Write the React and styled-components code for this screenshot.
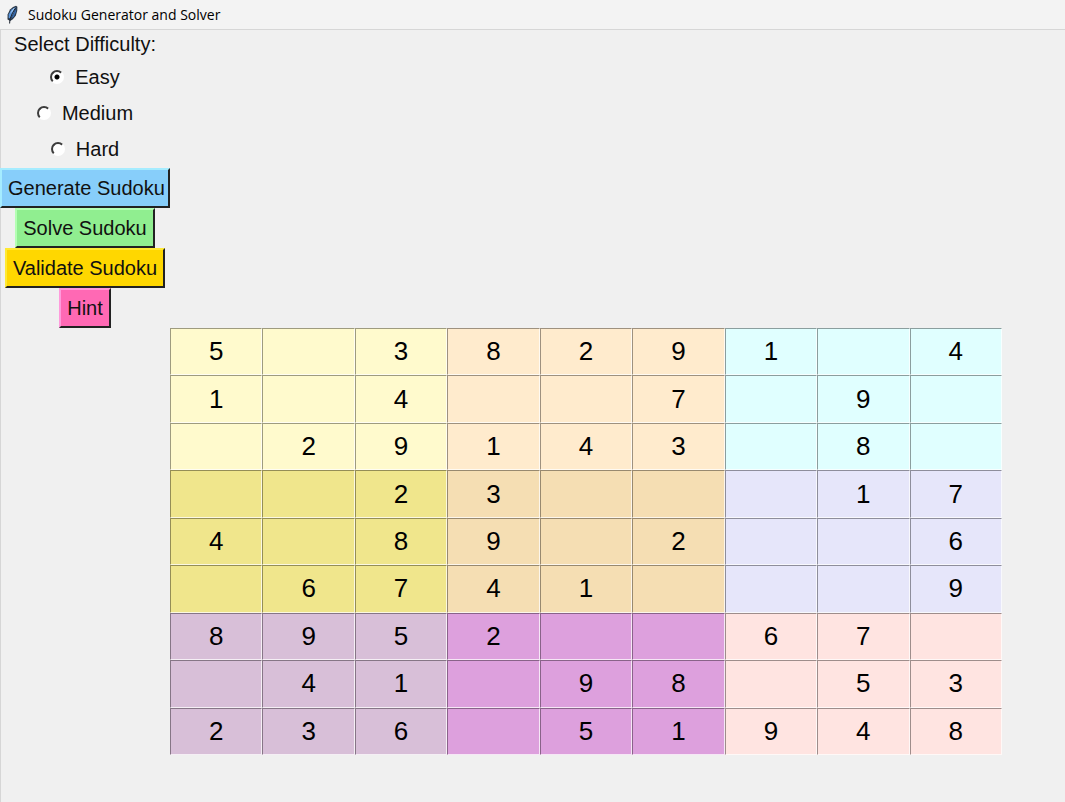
import React, { useState } from "react";
import styled, { createGlobalStyle } from "styled-components";

const GlobalStyle = createGlobalStyle`
  * { box-sizing: border-box; }
  body { margin: 0; background: #f0f0f0; }
`;

const Window = styled.div`
  display: flex;
  flex-direction: column;
  min-height: 100vh;
  background: #f0f0f0;
  color: #111;
  font-family: "Liberation Sans", Arial, sans-serif;
`;

const TitleBar = styled.header`
  display: flex;
  align-items: center;
  gap: 7px;
  height: 29px;
  padding-left: 5px;
  background: #f3f3f3;
`;

const Title = styled.h1`
  margin: 0;
  font: 400 14px/20px "Open Sans", "Noto Sans", sans-serif;
  color: #000;
`;

const Content = styled.main`
  flex: 1;
  display: grid;
  grid-template-columns: 170px minmax(0, 1fr);
  grid-template-rows: auto auto;
  align-content: start;
  padding-right: 63px;
  border-top: 1px solid #d6d6d6;
  box-shadow: inset 1px 0 #d6d6d6;
`;

const Controls = styled.form`
  display: flex;
  flex-direction: column;
  align-items: center;
`;

const Levels = styled.fieldset`
  display: flex;
  flex-direction: column;
  align-items: center;
  margin: 0;
  padding: 0 0 1px;
  border: 0;
`;

const Legend = styled.legend`
  padding: 0;
  margin: 0 auto;
  font-size: 20px;
  line-height: 29px;
`;

const Level = styled.label`
  display: flex;
  align-items: center;
  gap: 11px;
  height: 36px;
  font-size: 20px;
  line-height: 36px;
`;

const Radio = styled.input`
  appearance: none;
  flex: none;
  width: 14px;
  height: 14px;
  margin: 0;
  border: 2px solid;
  border-color: #3c3c3c #fff #fff #3c3c3c;
  border-radius: 50%;
  background: #fff;
  &:checked {
    background: radial-gradient(circle, #000 0 2px, #fff 3px);
  }
`;

const Action = styled.button`
  max-width: 100%;
  height: 40px;
  padding: 0 6px;
  border: 2px solid;
  border-color: ${(p) => p.$light} #222 #222 ${(p) => p.$light};
  background: ${(p) => p.$color};
  color: #111;
  font: 20px/36px "Liberation Sans", Arial, sans-serif;
  white-space: nowrap;
`;

const Board = styled.div`
  grid-column: 2;
  grid-row: 2;
  display: grid;
  grid-template-columns: repeat(9, minmax(0, 1fr));
  grid-template-rows: repeat(9, 1fr);
  height: 427px;
`;

const Cell = styled.input`
  width: 100%;
  min-width: 0;
  height: 100%;
  padding: 0;
  border: 1px solid;
  border-color: rgba(0, 0, 0, 0.38) rgba(255, 255, 255, 0.75) rgba(255, 255, 255, 0.75) rgba(0, 0, 0, 0.38);
  border-radius: 0;
  background: ${(p) => p.$color};
  color: #000;
  text-align: center;
  font: 26px/30px "Liberation Sans", Arial, sans-serif;
`;

const levels = ["Easy", "Medium", "Hard"];

const actions = [
  { label: "Generate Sudoku", color: "#87cefa", light: "#a5ecff" },
  { label: "Solve Sudoku", color: "#90ee90", light: "#b4ffb4" },
  { label: "Validate Sudoku", color: "#ffd700", light: "#ffe933" },
  { label: "Hint", color: "#ff69b4", light: "#ff9bdc" },
];

const boxColors = [
  "#fffacd", "#ffebcd", "#e0ffff",
  "#f0e68c", "#f5deb3", "#e6e6fa",
  "#d8bfd8", "#dda0dd", "#ffe4e1",
];

const puzzle = [
  "5.38291.4",
  "1.4..7.9.",
  ".29143.8.",
  "..23...17",
  "4.89.2..6",
  ".6741...9",
  "8952..67.",
  ".41.98.53",
  "236.51948",
];

function Feather() {
  return (
    <svg width="16" height="20" viewBox="0 0 16 20" aria-hidden="true">
      <path d="M11 .8 12.4 1.8 12.2 6 10.8 10.8 7.8 14.2 5.2 16 2.5 14.5 2.6 9.5 5 4.5 8 2Z" fill="#2b3848" />
      <path d="M10.8 2 9 7 5.2 13.8 3.6 12.8 3.8 9.2 6.4 4.5Z" fill="#5c97dc" />
      <path d="M11.4 3 11 7 9 11.2 6 14Z" fill="#356bb2" />
      <path d="M10.4 3 7 9 5 14 4.6 18.5" fill="none" stroke="#1b222d" />
      <path d="m9.3 3-3.2 4.6" fill="none" stroke="#a9cdf2" />
    </svg>
  );
}

export default function App() {
  const [level, setLevel] = useState("Easy");
  return (
    <Window>
      <GlobalStyle />
      <TitleBar>
        <Feather />
        <Title>Sudoku Generator and Solver</Title>
      </TitleBar>
      <Content>
        <Controls>
          <Levels>
            <Legend>Select Difficulty:</Legend>
            {levels.map((name) => (
              <Level key={name}>
                <Radio
                  type="radio"
                  name="level"
                  value={name}
                  checked={level === name}
                  onChange={() => setLevel(name)}
                />
                {name}
              </Level>
            ))}
          </Levels>
          {actions.map((a) => (
            <Action key={a.label} type="button" $color={a.color} $light={a.light}>
              {a.label}
            </Action>
          ))}
        </Controls>
        <Board>
          {puzzle.flatMap((row, r) =>
            [...row].map((value, c) => (
              <Cell
                key={`${r}-${c}`}
                aria-label={`Row ${r + 1}, column ${c + 1}`}
                maxLength={1}
                defaultValue={value === "." ? "" : value}
                $color={boxColors[Math.floor(r / 3) * 3 + Math.floor(c / 3)]}
              />
            ))
          )}
        </Board>
      </Content>
    </Window>
  );
}
